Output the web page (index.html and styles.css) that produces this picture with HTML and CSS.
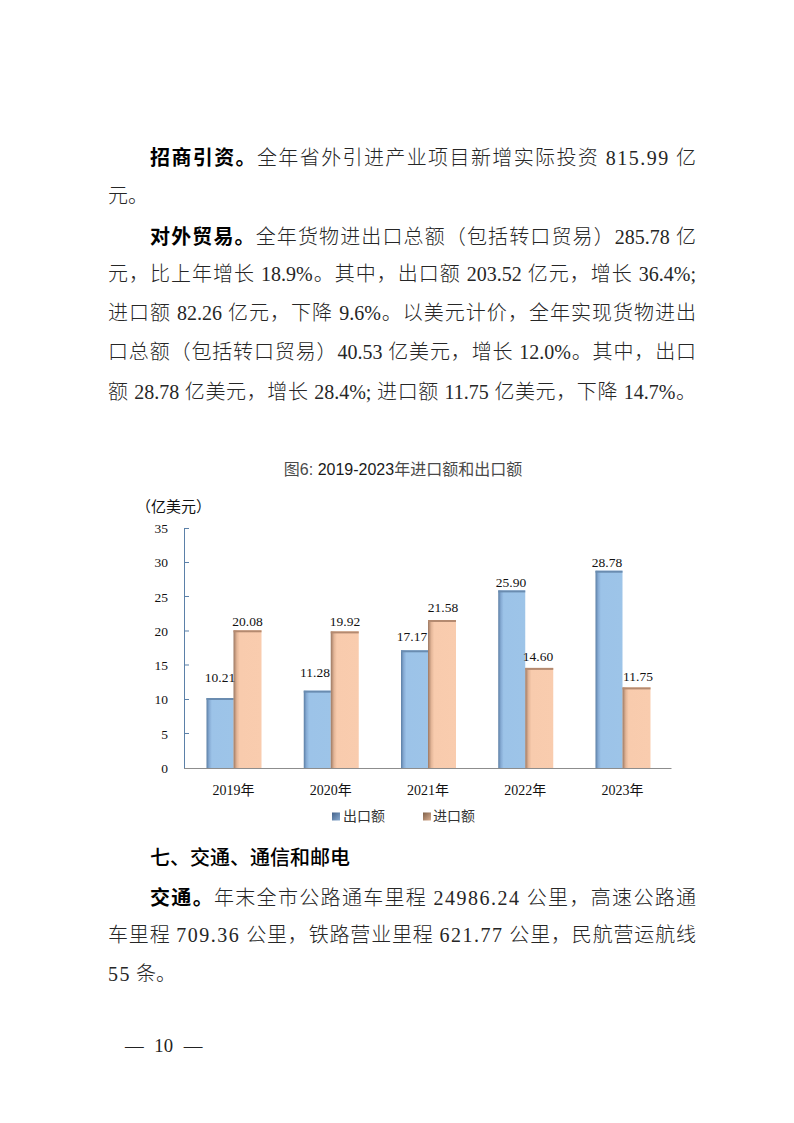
FILE: index.html
```html
<!DOCTYPE html>
<html lang="zh-CN">
<head>
<meta charset="utf-8">
<title>对外贸易</title>
<link rel="stylesheet" href="styles.css">
</head>
<body>
<div class="page">
  <div class="para">
    <span class="ln indent"><b class="lead">招商引资。</b>全年省外引进产业项目新增实际投资 <span class="fs">815.99</span> 亿</span>
    <span class="ln last">元。</span>
  </div>
  <div class="para">
    <span class="ln indent"><b class="lead">对外贸易。</b>全年货物进出口总额（包括转口贸易）285.78 亿</span>
    <span class="ln">元，比上年增长 18.9%。其中，出口额 203.52 亿元，增长 36.4%;</span>
    <span class="ln">进口额 82.26 亿元，下降 9.6%。以美元计价，全年实现货物进出</span>
    <span class="ln">口总额（包括转口贸易）40.53 亿美元，增长 12.0%。其中，出口</span>
    <span class="ln">额 28.78 亿美元，增长 28.4%; 进口额 11.75 亿美元，下降 14.7%。</span>
  </div>

  <div class="figure">
    <div class="fig-title">图6: <span class="yr">2019-2023</span>年进口额和出口额</div>
    <svg class="chart" width="588" height="357.4" viewBox="108 480 588 357.4" xmlns="http://www.w3.org/2000/svg">
      <defs>
        <linearGradient id="gBlue" x1="0" y1="0" x2="1" y2="0">
          <stop offset="0" stop-color="#5b7ea4"/>
          <stop offset="0.1" stop-color="#86abd4"/>
          <stop offset="0.2" stop-color="#9cc3e8"/>
          <stop offset="1" stop-color="#9dc4e8"/>
        </linearGradient>
        <linearGradient id="gOrange" x1="0" y1="0" x2="1" y2="0">
          <stop offset="0" stop-color="#9c7862"/>
          <stop offset="0.12" stop-color="#e4b698"/>
          <stop offset="0.22" stop-color="#f8cbad"/>
          <stop offset="1" stop-color="#f9ccae"/>
        </linearGradient>
        <linearGradient id="gBlueSq" x1="0" y1="0" x2="1" y2="1">
          <stop offset="0" stop-color="#42618a"/>
          <stop offset="1" stop-color="#8aabd0"/>
        </linearGradient>
        <linearGradient id="gOrangeSq" x1="0" y1="0" x2="1" y2="1">
          <stop offset="0" stop-color="#7d5f48"/>
          <stop offset="1" stop-color="#dcb092"/>
        </linearGradient>
      </defs>

      <text class="unit" x="136" y="512">（亿美元）</text>

      <g class="ylab">
        <text x="168" y="533">35</text>
        <text x="168" y="567.3">30</text>
        <text x="168" y="601.6">25</text>
        <text x="168" y="635.9">20</text>
        <text x="168" y="670.1">15</text>
        <text x="168" y="704.4">10</text>
        <text x="168" y="738.7">5</text>
        <text x="168" y="773">0</text>
      </g>

      <!-- bars -->
      <g>
        <rect x="206.5" y="698.0" width="27" height="70.0" fill="url(#gBlue)"/>
        <rect x="206.5" y="698.0" width="27" height="2" fill="#6a8cb0"/>
        <rect x="233.5" y="630.3" width="28" height="137.7" fill="url(#gOrange)"/>
        <rect x="233.5" y="630.3" width="28" height="2" fill="#b48a70"/>

        <rect x="303.75" y="690.65" width="27" height="77.35" fill="url(#gBlue)"/>
        <rect x="303.75" y="690.65" width="27" height="2" fill="#6a8cb0"/>
        <rect x="330.75" y="631.4" width="28" height="136.6" fill="url(#gOrange)"/>
        <rect x="330.75" y="631.4" width="28" height="2" fill="#b48a70"/>

        <rect x="401" y="650.3" width="27" height="117.7" fill="url(#gBlue)"/>
        <rect x="401" y="650.3" width="27" height="2" fill="#6a8cb0"/>
        <rect x="428" y="620.0" width="28" height="148.0" fill="url(#gOrange)"/>
        <rect x="428" y="620.0" width="28" height="2" fill="#b48a70"/>

        <rect x="498.25" y="590.4" width="27" height="177.6" fill="url(#gBlue)"/>
        <rect x="498.25" y="590.4" width="27" height="2" fill="#6a8cb0"/>
        <rect x="525.25" y="667.9" width="28" height="100.1" fill="url(#gOrange)"/>
        <rect x="525.25" y="667.9" width="28" height="2" fill="#b48a70"/>

        <rect x="595.5" y="570.7" width="27" height="197.3" fill="url(#gBlue)"/>
        <rect x="595.5" y="570.7" width="27" height="2" fill="#6a8cb0"/>
        <rect x="622.5" y="687.4" width="28" height="80.6" fill="url(#gOrange)"/>
        <rect x="622.5" y="687.4" width="28" height="2" fill="#b48a70"/>
      </g>

      <!-- axes -->
      <line x1="184.5" y1="528" x2="184.5" y2="768.5" class="yaxis"/>
      <g class="yaxis">
        <line x1="184.5" y1="528.5" x2="189" y2="528.5"/>
        <line x1="184.5" y1="562.5" x2="189" y2="562.5"/>
        <line x1="184.5" y1="596.5" x2="189" y2="596.5"/>
        <line x1="184.5" y1="631" x2="189" y2="631"/>
        <line x1="184.5" y1="665" x2="189" y2="665"/>
        <line x1="184.5" y1="699.5" x2="189" y2="699.5"/>
        <line x1="184.5" y1="733.5" x2="189" y2="733.5"/>
      </g>
      <line x1="184" y1="768.5" x2="671.5" y2="768.5" class="xaxis"/>

      <!-- value labels -->
      <g class="vlab">
        <text x="220" y="682.5">10.21</text>
        <text x="247.5" y="626">20.08</text>
        <text x="315" y="677.5">11.28</text>
        <text x="345" y="626.5">19.92</text>
        <text x="412" y="641.5">17.17</text>
        <text x="443" y="612.5">21.58</text>
        <text x="511" y="587.5">25.90</text>
        <text x="538" y="661">14.60</text>
        <text x="607" y="567">28.78</text>
        <text x="638" y="681">11.75</text>
      </g>

      <!-- categories -->
      <g class="xlab">
        <text x="233.5" y="795">2019年</text>
        <text x="330.75" y="795">2020年</text>
        <text x="428" y="795">2021年</text>
        <text x="525.25" y="795">2022年</text>
        <text x="622.5" y="795">2023年</text>
      </g>

      <!-- legend -->
      <rect x="332" y="812.5" width="8" height="8" fill="url(#gBlueSq)"/>
      <text class="legend" x="343" y="821.5">出口额</text>
      <rect x="423" y="812.5" width="8" height="8" fill="url(#gOrangeSq)"/>
      <text class="legend" x="433" y="821.5">进口额</text>
    </svg>
  </div>

  <div class="heading">七、交通、通信和邮电</div>
  <div class="para">
    <span class="ln indent"><b class="lead">交通。</b>年末全市公路通车里程 <span class="fs">24986.24</span> 公里，高速公路通</span>
    <span class="ln">车里程 <span class="fs">709.36</span> 公里，铁路营业里程 <span class="fs">621.77</span> 公里，民航营运航线</span>
    <span class="ln last"><span class="fs">55</span> 条。</span>
  </div>

  <div class="pageno">— 10 —</div>
</div>
</body>
</html>
```

FILE: styles.css
```css
html, body {
  margin: 0;
  padding: 0;
  background: #ffffff;
}

.page {
  width: 794px;
  height: 1123px;
  box-sizing: border-box;
  padding: 137.4px 98px 0 108px;
  color: #262626;
  font-family: "Liberation Serif", "Noto Sans CJK SC", serif;
  font-size: 20px;
  font-weight: 300;
  overflow: hidden;
}

.para {
  display: flex;
  flex-direction: column;
}

.ln {
  display: block;
  height: 39.2px;
  line-height: 39.2px;
  text-align: justify;
  text-align-last: justify;
}

.ln.last {
  text-align-last: left;
}

.ln.indent {
  padding-left: 42px;
}

.lead {
  font-family: "Noto Sans CJK SC", sans-serif;
  font-weight: 700;
  color: #000;
}

.fs {
  letter-spacing: 1.5px;
}

.figure {
  margin-top: 48.4px;
  display: flex;
  flex-direction: column;
}

.fig-title {
  height: 20px;
  line-height: 20px;
  text-align: center;
  font-family: "Liberation Sans", "Noto Sans CJK SC", sans-serif;
  font-size: 16px;
  font-weight: 400;
  color: #4a4a4a;
  padding-left: 2px;
}

.fig-title .yr {
  color: #1a1a1a;
}

.chart {
  display: block;
}

.chart text {
  font-family: "Liberation Serif", "Noto Sans CJK SC", serif;
  font-weight: 400;
  fill: #111;
}

.unit {
  font-size: 15px;
}

.ylab text {
  font-size: 13.5px;
  text-anchor: end;
}

.vlab text {
  font-size: 13.5px;
  text-anchor: middle;
}

.xlab text {
  font-size: 14px;
  text-anchor: middle;
}

.legend {
  font-size: 14px;
}

.chart text.legend {
  fill: #333;
}

.yaxis, .yaxis line {
  stroke: #5a7fa8;
  stroke-width: 1;
}

.xaxis {
  stroke: #8c8c8c;
  stroke-width: 1;
}

.heading {
  height: 39.2px;
  line-height: 39.2px;
  padding-left: 42px;
  font-family: "Noto Sans CJK SC", sans-serif;
  font-weight: 500;
  color: #000;
}

.pageno {
  margin-top: 36.4px;
  height: 30px;
  line-height: 30px;
  padding-left: 17px;
  font-family: "Liberation Serif", serif;
  font-size: 18.7px;
  font-weight: 400;
  word-spacing: 6px;
  color: #222;
}
```
